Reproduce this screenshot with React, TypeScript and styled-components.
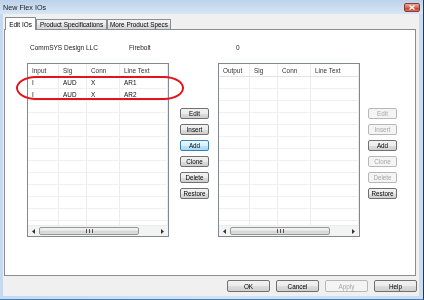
import React from 'react';
import styled, { createGlobalStyle, css } from 'styled-components';

const GlobalStyle = createGlobalStyle`
  html, body {
    margin: 0;
    padding: 0;
    background: #ffffff;
  }
  body {
    font-family: 'Liberation Sans', Arial, sans-serif;
    -webkit-font-smoothing: antialiased;
  }
`;

const FONT = `'Liberation Sans', Arial, sans-serif`;

const Window = styled.div`
  position: relative;
  width: 424px;
  height: 300px;
  box-sizing: border-box;
  display: flex;
  flex-direction: column;
  overflow: hidden;
  will-change: transform;
  background: linear-gradient(90deg, #c6daef 0%, #d3e3f4 50%, #c9dcf0 100%);
  border-right: 1px solid #25384f;
  border-bottom: 1px solid #3d7fbf;
  font-family: ${FONT};
  font-size: 6.6px;
  color: #000;
`;

const TitleBar = styled.div`
  height: 14px;
  flex: none;
  display: flex;
  align-items: center;
  justify-content: space-between;
  padding: 0 3px 0 3px;
  background: linear-gradient(#bcd2ea, #cfe0f2 70%, #d6e6f6);
`;

const Title = styled.span`
  font-size: 7.2px;
  color: #1b1b1b;
  padding-top: 1px;
`;

const CloseButton = styled.div`
  width: 16px;
  height: 9px;
  box-sizing: border-box;
  border: 1px solid #8e3b32;
  border-radius: 2px;
  background: linear-gradient(#e9a89c, #d36b5b 50%, #c2402f 55%, #d8705e);
  display: flex;
  align-items: center;
  justify-content: center;
`;

const Body = styled.div`
  flex: 1;
  display: flex;
  flex-direction: column;
  margin: 0 4px 3px 3px;
  padding-top: 3px;
  background: #f0f0f0;
`;

const TabStrip = styled.div`
  height: 12px;
  flex: none;
  display: flex;
  align-items: flex-end;
  padding-left: 2px;
`;

const Tab = styled.div<{ $active?: boolean; $width: number }>`
  position: relative;
  box-sizing: border-box;
  width: ${(p) => p.$width}px;
  display: flex;
  align-items: center;
  justify-content: center;
  border: 1px solid #898c95;
  border-bottom: none;
  border-radius: 1px 1px 0 0;
  font-size: 6.4px;
  white-space: nowrap;
  ${(p) =>
    p.$active
      ? css`
          height: 13px;
          margin-bottom: -1px;
          z-index: 1;
          background: #ffffff;
        `
      : css`
          height: 10px;
          background: linear-gradient(#f3f3f3, #ebebeb 50%, #dddddd 51%, #d7d7d7);
        `}
`;

const TabPage = styled.div`
  flex: 1;
  box-sizing: border-box;
  margin: 0 3px 0 1px;
  border: 1px solid #898c95;
  background: #ffffff;
  display: flex;
  flex-direction: column;
`;

const InfoRow = styled.div`
  display: grid;
  grid-template-columns: 99px 107px auto;
  height: 10px;
  align-items: center;
  margin-top: 12px;
  padding-left: 25px;
  font-size: 6.5px;
  color: #222;
`;

const Panels = styled.div`
  display: flex;
  align-items: flex-start;
  margin-top: 11px;
  padding-left: 22px;
`;

const List = styled.div<{ $gap: number }>`
  width: 142px;
  height: 174px;
  box-sizing: border-box;
  margin-left: ${(p) => p.$gap}px;
  border: 1px solid #828790;
  background: #ffffff;
  display: flex;
  flex-direction: column;
  overflow: hidden;
`;

const Rows = styled.div`
  flex: 1;
  overflow: hidden;
`;

const Row = styled.div<{ $header?: boolean }>`
  display: grid;
  grid-template-columns: 31px 28px 33px 1fr;
  height: ${(p) => (p.$header ? 12 : 11)}px;
  border-bottom: 1px solid ${(p) => (p.$header ? '#e3e3e3' : '#f0f0f0')};
  color: ${(p) => (p.$header ? '#333' : '#111')};
`;

const Cell = styled.div`
  border-right: 1px solid #ececec;
  padding-left: 4px;
  display: flex;
  align-items: center;
  white-space: nowrap;
  font-size: 6.4px;
`;

const ScrollBar = styled.div`
  height: 10px;
  flex: none;
  display: flex;
  align-items: center;
  background: #f3f3f3;
  border-top: 1px solid #ececec;
`;

const ScrollArrow = styled.div`
  width: 11px;
  height: 10px;
  display: flex;
  align-items: center;
  justify-content: center;
  flex: none;
`;

const Track = styled.div`
  flex: 1;
  height: 10px;
  display: flex;
  align-items: center;
`;

const Thumb = styled.div`
  width: 100px;
  height: 8px;
  box-sizing: border-box;
  border: 1px solid #979797;
  border-radius: 2px;
  background: linear-gradient(#f5f5f5, #e6e6e6 50%, #d5d5d5 51%, #dcdcdc);
  display: flex;
  align-items: center;
  justify-content: center;
`;

const ButtonCol = styled.div<{ $gap: number }>`
  display: flex;
  flex-direction: column;
  gap: 5px;
  width: 29px;
  margin-left: ${(p) => p.$gap}px;
  padding-top: 45px;
`;

const buttonBase = css<{ $disabled?: boolean; $focused?: boolean }>`
  box-sizing: border-box;
  padding: 0;
  display: flex;
  align-items: center;
  justify-content: center;
  font-family: ${FONT};
  border: 1px solid #707070;
  border-radius: 2px;
  color: #000;
  background: linear-gradient(#f2f2f2, #ebebeb 50%, #dddddd 51%, #cfcfcf);
  ${(p) =>
    p.$disabled &&
    css`
      border-color: #b8b8b8;
      color: #a6a6a6;
      background: #f4f4f4;
    `}
  ${(p) =>
    p.$focused &&
    css`
      border-color: #3c7fb1;
      background: linear-gradient(#eaf6fd, #d9f0fc 50%, #bee6fd 51%, #a7d9f5);
    `}
`;

const SideButton = styled.button<{ $disabled?: boolean; $focused?: boolean }>`
  ${buttonBase}
  width: 29px;
  height: 11px;
  font-size: 6.3px;
`;

const Footer = styled.div`
  height: 20px;
  flex: none;
  display: flex;
  justify-content: flex-end;
  align-items: flex-start;
  gap: 6px;
  padding: 4px 2px 0 0;
  box-sizing: border-box;
`;

const DialogButton = styled.button<{ $disabled?: boolean; $focused?: boolean }>`
  ${buttonBase}
  width: 43px;
  height: 12px;
  font-size: 6.4px;
`;

const Highlight = styled.div`
  position: absolute;
  left: 16px;
  top: 76px;
  width: 168px;
  height: 24px;
  box-sizing: border-box;
  border: 2px solid #e3141b;
  border-radius: 20px / 12px;
  pointer-events: none;
`;

const ArrowLeft = () => (
  <svg width="3" height="5" viewBox="0 0 3 5">
    <path d="M3 0 L0 2.5 L3 5 Z" fill="#333" />
  </svg>
);

const ArrowRight = () => (
  <svg width="3" height="5" viewBox="0 0 3 5">
    <path d="M0 0 L3 2.5 L0 5 Z" fill="#333" />
  </svg>
);

const Grip = () => (
  <svg width="7" height="4" viewBox="0 0 7 4">
    <rect x="0" y="0" width="1" height="4" fill="#555" />
    <rect x="3" y="0" width="1" height="4" fill="#555" />
    <rect x="6" y="0" width="1" height="4" fill="#555" />
  </svg>
);

type Entry = [string, string, string, string];

const IOList: React.FC<{ header: Entry; entries: Entry[]; gap: number }> = ({ header, entries, gap }) => {
  const blanks = Array.from({ length: 14 - entries.length });
  return (
    <List $gap={gap}>
      <Rows>
        <Row $header>
          {header.map((h, i) => (
            <Cell key={i}>{h}</Cell>
          ))}
        </Row>
        {entries.map((e, r) => (
          <Row key={r}>
            {e.map((v, i) => (
              <Cell key={i}>{v}</Cell>
            ))}
          </Row>
        ))}
        {blanks.map((_, r) => (
          <Row key={`b${r}`}>
            <Cell />
            <Cell />
            <Cell />
            <Cell />
          </Row>
        ))}
      </Rows>
      <ScrollBar>
        <ScrollArrow>
          <ArrowLeft />
        </ScrollArrow>
        <Track>
          <Thumb>
            <Grip />
          </Thumb>
        </Track>
        <ScrollArrow>
          <ArrowRight />
        </ScrollArrow>
      </ScrollBar>
    </List>
  );
};

const actions = ['Edit', 'Insert', 'Add', 'Clone', 'Delete', 'Restore'];
const outputEnabled = ['Add', 'Restore'];

const App: React.FC = () => (
  <>
    <GlobalStyle />
    <Window>
      <TitleBar>
        <Title>New Flex IOs</Title>
        <CloseButton>
          <svg width="6" height="5" viewBox="0 0 6 5">
            <path d="M0.5 0.5 L5.5 4.5 M5.5 0.5 L0.5 4.5" stroke="#fff" strokeWidth="1.3" />
          </svg>
        </CloseButton>
      </TitleBar>
      <Body>
        <TabStrip>
          <Tab $active $width={31}>
            Edit IOs
          </Tab>
          <Tab $width={71}>Product Specifications</Tab>
          <Tab $width={64}>More Product Specs</Tab>
        </TabStrip>
        <TabPage>
          <InfoRow>
            <span>CommSYS Design LLC</span>
            <span>Firebolt</span>
            <span>0</span>
          </InfoRow>
          <Panels>
            <IOList
              gap={0}
              header={['Input', 'Sig', 'Conn', 'Line Text']}
              entries={[
                ['I', 'AUD', 'X', 'AR1'],
                ['I', 'AUD', 'X', 'AR2'],
              ]}
            />
            <ButtonCol $gap={11}>
              {actions.map((a) => (
                <SideButton key={a} $focused={a === 'Add'}>
                  {a}
                </SideButton>
              ))}
            </ButtonCol>
            <IOList gap={9} header={['Output', 'Sig', 'Conn', 'Line Text']} entries={[]} />
            <ButtonCol $gap={8}>
              {actions.map((a) => (
                <SideButton key={a} $disabled={!outputEnabled.includes(a)}>
                  {a}
                </SideButton>
              ))}
            </ButtonCol>
          </Panels>
        </TabPage>
        <Footer>
          <DialogButton>OK</DialogButton>
          <DialogButton>Cancel</DialogButton>
          <DialogButton $disabled>Apply</DialogButton>
          <DialogButton>Help</DialogButton>
        </Footer>
      </Body>
      <Highlight />
    </Window>
  </>
);

export default App;
